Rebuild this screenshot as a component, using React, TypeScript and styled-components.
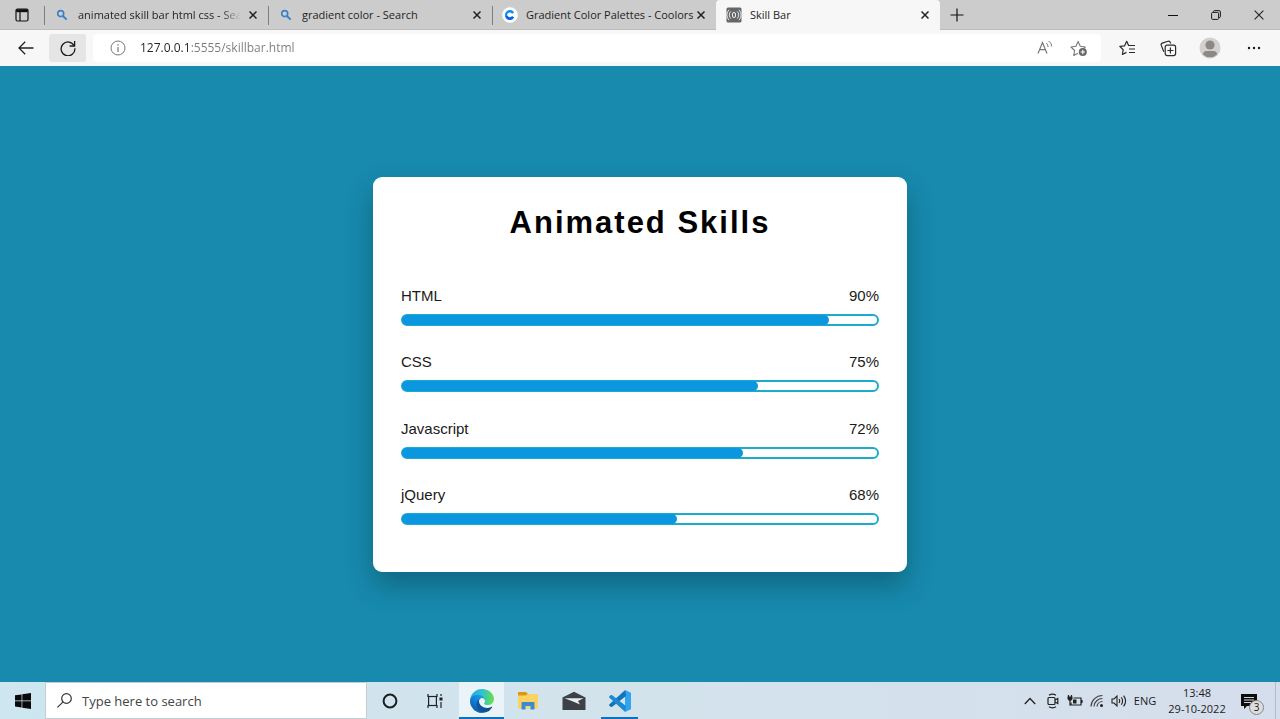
import React from "react";
import styled, { createGlobalStyle, css } from "styled-components";

const GlobalStyle = createGlobalStyle`
  *, *::before, *::after { box-sizing: border-box; }
  html, body, #root { height: 100%; }
  body { margin: 0; font-family: "Open Sans", "Noto Sans", sans-serif; overflow: hidden; }
  button { font: inherit; color: inherit; background: none; border: 0; padding: 0; margin: 0; }
  h1, ul, p { margin: 0; padding: 0; }
  svg { display: block; flex: none; }
`;

const Desktop = styled.div`
  display: flex;
  flex-direction: column;
  min-height: 100%;
`;

/* ---------- browser: tab strip ---------- */

const TabStrip = styled.header`
  display: flex;
  height: 30px;
  background: #cccccc;
  border-bottom: 1px solid #bdbdbd;
`;

const StripButton = styled.button<{ $width: number }>`
  display: flex;
  align-items: center;
  justify-content: center;
  width: ${(p) => p.$width}px;
  flex: none;
  color: #1b1b1b;
`;

const TabList = styled.div`
  display: flex;
  flex: 0 1 897px;
  min-width: 0;
`;

const Tab = styled.div<{ $active?: boolean }>`
  position: relative;
  display: flex;
  flex: 0 1 224px;
  min-width: 0;
  align-items: center;
  padding: 0 7px 0 10px;
  ${(p) =>
    p.$active
      ? css`
          height: 30px;
          background: #f7f7f7;
          border-radius: 4px 4px 0 0;
        `
      : css`
          &::before {
            content: "";
            position: absolute;
            left: 0;
            top: 6px;
            height: 19px;
            width: 1px;
            background: #7d7d7d;
          }
        `}
`;

const TabTitle = styled.button<{ $fade?: boolean }>`
  flex: 1;
  min-width: 0;
  margin-left: 8px;
  overflow: hidden;
  white-space: nowrap;
  text-align: left;
  font-size: 11px;
  line-height: 16px;
  color: #1f1f1f;
  ${(p) =>
    p.$fade &&
    css`
      margin-right: 4px;
      mask-image: linear-gradient(to right, #000 calc(100% - 20px), transparent);
    `}
`;

const CloseTab = styled.button`
  display: flex;
  align-items: center;
  justify-content: center;
  width: 16px;
  height: 16px;
  flex: none;
`;

const Favicon = styled.span`
  display: flex;
  align-items: center;
  justify-content: center;
  width: 16px;
  flex: none;
`;

const WindowControls = styled.div`
  display: flex;
  margin-left: auto;
`;

/* ---------- browser: toolbar ---------- */

const Toolbar = styled.div`
  display: flex;
  align-items: center;
  height: 36px;
  padding: 0 4px 0 7px;
  background: #f7f7f7;
`;

const ToolButton = styled.button<{ $active?: boolean; $width?: number }>`
  display: flex;
  align-items: center;
  justify-content: center;
  width: ${(p) => p.$width ?? 42}px;
  height: 28px;
  flex: none;
  border-radius: 3px;
  color: #2b2b2b;
  ${(p) => p.$active && "margin-left: 4px; background: #e5e5e5;"}
`;

const AddressBar = styled.form`
  display: flex;
  align-items: center;
  flex: 1;
  min-width: 0;
  height: 28px;
  margin: 0 5px 0 7px;
  padding: 0 5px 0 9px;
  background: #ffffff;
  border-radius: 4px;
`;

const AddressInput = styled.input`
  flex: 1;
  min-width: 0;
  margin-left: 6px;
  padding: 0;
  border: 0;
  outline: 0;
  font: 12px/18px "Open Sans", "Noto Sans", sans-serif;
  color: transparent;
  background: linear-gradient(to right, #222222 51px, #7a7a7a 51px);
  background-clip: text;
  -webkit-background-clip: text;
`;

/* ---------- page ---------- */

const Page = styled.main`
  display: flex;
  flex: 1;
  align-items: center;
  justify-content: center;
  padding: 20px 20px 19px;
  background: #178aae;
`;

const Card = styled.section`
  width: 534px;
  max-width: 100%;
  padding: 25px 28px 47px;
  background: #ffffff;
  border-radius: 9px;
  box-shadow: 0 14px 28px rgba(0, 0, 0, 0.25);
  font-family: "Liberation Sans", Arial, sans-serif;
`;

const Title = styled.h1`
  font-size: 31px;
  line-height: 42px;
  letter-spacing: 2px;
  text-align: center;
  color: #000000;
`;

const SkillList = styled.ul`
  display: flex;
  flex-direction: column;
  justify-content: space-between;
  min-height: 238px;
  margin-top: 43px;
  list-style: none;
`;

const SkillLabel = styled.div`
  display: flex;
  justify-content: space-between;
  margin-bottom: 9px;
  font-size: 15px;
  line-height: 18px;
  color: #1a1a1a;
`;

const Track = styled.div`
  height: 12px;
  border: 2px solid #1cabcb;
  border-radius: 6px;
  background: #ffffff;
`;

const Fill = styled.div`
  height: 10px;
  margin: -1px 0 0 -1px;
  border-radius: 5px;
  background: #0b97df;
`;

/* ---------- taskbar ---------- */

const Taskbar = styled.footer`
  display: flex;
  height: 37px;
  background: linear-gradient(to right, #cde6f0, #d3e3ec 50%, #d5deec);
`;

const StartButton = styled.button`
  display: flex;
  align-items: center;
  justify-content: center;
  width: 45px;
  flex: none;
`;

const SearchBox = styled.label`
  display: flex;
  align-items: center;
  flex: 0 1 322px;
  min-width: 0;
  padding-left: 11px;
  background: #ffffff;
  border: 1px solid #c3ced3;
`;

const SearchInput = styled.input`
  flex: 1;
  min-width: 0;
  margin-left: 9px;
  padding: 0;
  border: 0;
  outline: 0;
  background: none;
  font: 13px/20px "Open Sans", "Noto Sans", sans-serif;
  &::placeholder { color: #444444; opacity: 1; }
`;

const Apps = styled.nav`
  display: flex;
  gap: 1px;
`;

const AppButton = styled.button<{ $active?: boolean; $running?: boolean }>`
  display: flex;
  align-items: center;
  justify-content: center;
  width: 45px;
  ${(p) => p.$active && "background: #eaf4f8;"}
  ${(p) => p.$active && "box-shadow: inset 0 -2px #0a72c4;"}
  ${(p) =>
    p.$running &&
    "background: linear-gradient(#0a72c4, #0a72c4) center bottom / 37px 2px no-repeat;"}
`;

const Tray = styled.div`
  display: flex;
  align-items: center;
  margin-left: auto;
  color: #1c1c1c;
`;

const TrayButton = styled.button<{ $width?: number }>`
  position: relative;
  display: flex;
  align-items: center;
  justify-content: center;
  width: ${(p) => p.$width ?? 22}px;
  height: 37px;
  font-size: 11px;
`;

const NotificationButton = styled(TrayButton)`
  padding-right: 12px;
`;

const Clock = styled.button`
  width: 74px;
  font-size: 11px;
  line-height: 16px;
  text-align: center;
`;

const Badge = styled.span`
  position: absolute;
  right: 11px;
  bottom: 4px;
  width: 15px;
  height: 15px;
  border: 1px solid #858585;
  border-radius: 50%;
  background: #dddddd;
  font-size: 10px;
  line-height: 13px;
  text-align: center;
`;

const ShowDesktop = styled.button`
  width: 5px;
  height: 37px;
  border-left: 1px solid #b4bccb;
`;

/* ---------- icons ---------- */

const Cross = ({ size = 8, color = "#222", w = 1.5 }: { size?: number; color?: string; w?: number }) => (
  <svg width={size} height={size} viewBox="0 0 8 8">
    <path d="M.5.5l7 7M7.5.5l-7 7" stroke={color} strokeWidth={w} fill="none" />
  </svg>
);

const BingSearch = () => (
  <svg width="12" height="12" viewBox="0 0 12 12" fill="none" stroke="#3a80c6">
    <circle cx="4.7" cy="4.6" r="3" strokeWidth="1.6" />
    <path d="M7 7l3.6 3.6" strokeWidth="2" />
  </svg>
);

const CoolorsLogo = () => (
  <svg width="16" height="16" viewBox="0 0 16 16">
    <circle cx="8" cy="8" r="7.8" fill="#fff" />
    <path d="M12.2 5.4A5 5 0 1 0 12.2 10.6L10 9.3A2.6 2.6 0 1 1 10 6.7Z" fill="#0a8df5" />
    <path d="M12.2 10.6A5 5 0 0 1 3.2 9.5L5.6 8.8A2.6 2.6 0 0 0 10 9.3Z" fill="#0b62ee" />
  </svg>
);

const BroadcastLogo = () => (
  <svg width="16" height="16" viewBox="0 0 16 16" fill="none" stroke="#f3f3f3">
    <rect x=".5" y=".5" width="15" height="15" rx="1.5" fill="#666" stroke="none" />
    <rect x="6.5" y="5.5" width="3" height="5" rx="1.5" strokeWidth="1" />
    <path d="M4.8 4.4a5 5 0 0 0 0 7.200M11.200 4.400a5 5 0 0 1 0 7.200M3 2.800a7.500 7.500 0 0 0 0 10.400M13 2.800a7.500 7.500 0 0 1 0 10.400" strokeWidth=".9" />
  </svg>
);

const TabActions = () => (
  <svg width="14" height="14" viewBox="0 0 14 14" fill="none" stroke="#111">
    <rect x="1" y="1" width="12" height="12" rx="1.5" strokeWidth="1.2" />
    <path d="M1.2 2.7h11.6" strokeWidth="3" />
    <path d="M5 3v10" strokeWidth="1.2" />
  </svg>
);

const Edge = () => (
  <svg width="24" height="24" viewBox="0 0 256 256">
    <defs>
      <linearGradient id="edgeBase" x1="63" y1="177" x2="241" y2="177" gradientUnits="userSpaceOnUse">
        <stop offset="0" stopColor="#0c59a4" />
        <stop offset="1" stopColor="#114a8b" />
      </linearGradient>
      <linearGradient id="edgeSide" x1="157" y1="100" x2="46" y2="220" gradientUnits="userSpaceOnUse">
        <stop offset="0" stopColor="#1b9de2" />
        <stop offset=".5" stopColor="#1383d6" />
        <stop offset="1" stopColor="#0e5fb4" />
      </linearGradient>
      <linearGradient id="edgeTop" x1="20" y1="90" x2="245" y2="110" gradientUnits="userSpaceOnUse">
        <stop offset="0" stopColor="#2aa9e6" />
        <stop offset=".45" stopColor="#2cc3d2" />
        <stop offset="1" stopColor="#66dd4f" />
      </linearGradient>
    </defs>
    <path fill="url(#edgeBase)" d="M231 190.5a93.700 93.700 0 0 1-10.500 4.700 101.900 101.900 0 0 1-35.900 6.400c-47.300 0-88.500-32.500-88.500-74.300a31.500 31.500 0 0 1 16.400-27.300c-42.800 1.800-53.800 46.400-53.800 72.500 0 73.900 68.100 81.400 82.800 81.400 7.900 0 19.800-2.300 27-4.600l1.300-.4a128.300 128.300 0 0 0 66.600-52.800 4 4 0 0 0-5.400-5.600Z" />
    <path fill="url(#edgeSide)" d="M105.700 241.400a79.200 79.200 0 0 1-22.700-21.300 80.700 80.700 0 0 1 29.500-120c3.200-1.500 8.500-4.100 15.600-4a32.400 32.400 0 0 1 25.700 13 31.900 31.900 0 0 1 6.300 18.700c0-.2 24.500-79.600-80-79.600-43.900 0-80 41.700-80 78.200a130.200 130.200 0 0 0 12.100 56 128 128 0 0 0 156.400 67 75.500 75.500 0 0 1-62.800-8Z" />
    <path fill="url(#edgeTop)" d="M152.300 148.900c-.9 1-3.400 2.500-3.400 5.600 0 2.600 1.700 5.200 4.800 7.300 14.400 10.100 41.700 8.700 41.700 8.700a59.600 59.600 0 0 0 30.300-8.300 61.400 61.400 0 0 0 30.400-52.900c.3-22.400-8-37.300-11.300-43.900C223.500 23.900 177.700 0 128 0A128 128 0 0 0 0 126.200c.5-36.500 36.800-66 80-66 3.500 0 23.500.3 42 10.100 16.300 8.600 24.900 18.900 30.900 29.200 6.200 10.700 7.300 24.200 7.300 29.600s-2.700 13.300-7.900 19.800Z" />
  </svg>
);

const Explorer = () => (
  <svg width="22" height="20" viewBox="0 0 22 20">
    <path d="M1 2q0-1 1-1h7l2 2v4H1z" fill="#d99a12" />
    <path d="M1 4.500h8l1.500-1.500H20q1 0 1 1v13.500H1z" fill="#fdd264" />
    <path d="M4.500 18.500V12q0-1 1-1h11q1 0 1 1v6.500h-4V15h-5v3.500z" fill="#3a8bd3" />
  </svg>
);

const Mail = () => (
  <svg width="24" height="20" viewBox="0 0 24 20">
    <path d="M.5 6.500L12 .8l11.500 5.700V19H.5z" fill="#3d4146" />
    <path d="M2.500 7.300h19L16 10l2 3.500-7-3z" fill="#e6eef3" />
  </svg>
);

const VsCode = () => (
  <svg width="24" height="24" viewBox="0 0 24 24">
    <path d="M17 1l6 2.700v16.600L17 23V1z" fill="#2fa4ef" />
    <path d="M17.200 1L1.200 15.400q-.5.500 0 1l1.700 1.500q.5.400 1 0L18 7z" fill="#1175bd" />
    <path d="M17.200 23L1.200 8.600q-.5-.5 0-1l1.700-1.500q.5-.4 1 0L18 17z" fill="#1b8ad3" />
  </svg>
);

/* ---------- data ---------- */

const tabs = [
  { title: "animated skill bar html css - Search", icon: <BingSearch />, fade: true },
  { title: "gradient color - Search", icon: <BingSearch /> },
  { title: "Gradient Color Palettes - Coolors", icon: <CoolorsLogo /> },
  { title: "Skill Bar", icon: <BroadcastLogo />, active: true },
];

const skills = [
  { name: "HTML", label: "90%", fill: 90 },
  { name: "CSS", label: "75%", fill: 75 },
  { name: "Javascript", label: "72%", fill: 72 },
  { name: "jQuery", label: "68%", fill: 58 },
];

export default function App() {
  return (
    <Desktop>
      <GlobalStyle />
      <TabStrip>
        <StripButton $width={44} aria-label="Tab actions">
          <TabActions />
        </StripButton>
        <TabList>
          {tabs.map((t) => (
            <Tab key={t.title} $active={t.active}>
              <Favicon>{t.icon}</Favicon>
              <TabTitle $fade={t.fade}>{t.title}</TabTitle>
              <CloseTab aria-label="Close tab">
                <Cross />
              </CloseTab>
            </Tab>
          ))}
        </TabList>
        <StripButton $width={32} aria-label="New tab">
          <svg width="14" height="14" viewBox="0 0 14 14">
            <path d="M7 .5v13M.5 7h13" stroke="#111" strokeWidth="1.200" />
          </svg>
        </StripButton>
        <WindowControls>
          <StripButton $width={43} aria-label="Minimize">
            <svg width="10" height="10" viewBox="0 0 10 10">
              <path d="M0 5.500h10" stroke="#111" />
            </svg>
          </StripButton>
          <StripButton $width={43} aria-label="Restore">
            <svg width="10" height="10" viewBox="0 0 10 10" fill="none" stroke="#1b1b1b">
              <rect x=".6" y="2.400" width="7" height="7" rx="1" />
              <path d="M2.600 2.200V1.500q0-.9.900-.9H8q1.400 0 1.400 1.400v4.600q0 .9-.9.900h-.7" />
            </svg>
          </StripButton>
          <StripButton $width={43} aria-label="Close">
            <Cross size={10} w={0.9} />
          </StripButton>
        </WindowControls>
      </TabStrip>

      <Toolbar>
        <ToolButton $width={38} aria-label="Back">
          <svg width="16" height="14" viewBox="0 0 16 14" fill="none" stroke="#222" strokeWidth="1.300">
            <path d="M15.500 7H1M7.200.8L1 7l6.200 6.200" />
          </svg>
        </ToolButton>
        <ToolButton $width={37} $active aria-label="Refresh">
          <svg width="16" height="16" viewBox="0 0 16 16" fill="none" stroke="#1a1a1a" strokeWidth="1.300">
            <path d="M14.300 6A6.900 6.900 0 1 0 14.900 8.300" />
            <path d="M14.600 1v5h-5" />
          </svg>
        </ToolButton>
        <AddressBar>
          <ToolButton $width={32} type="button" aria-label="Site information">
            <svg width="16" height="16" viewBox="0 0 16 16" fill="none" stroke="#777">
              <circle cx="8" cy="8" r="7" />
              <path d="M8 7v5M8 4.300v1.400" strokeWidth="1.200" />
            </svg>
          </ToolButton>
          <AddressInput aria-label="Address" defaultValue="127.0.0.1:5555/skillbar.html" />
          <ToolButton $width={34} type="button" aria-label="Read aloud">
            <svg width="16" height="16" viewBox="0 0 16 16" fill="none" stroke="#777" strokeWidth="1.200">
              <path d="M1 13.500L5.500 2.500 10 13.500M2.600 9.700h5.800" />
              <path d="M9.300 3q1.800 1.500 1.800 4M11.700 1q3 2 3 5.500" strokeWidth="1" />
            </svg>
          </ToolButton>
          <ToolButton $width={34} type="button" aria-label="Add to favorites">
            <svg width="18" height="17" viewBox="0 0 18 17" fill="none" stroke="#777" strokeWidth="1.100">
              <path d="M8 13.200l-4.300 2.300.9-5L1 7l4.900-.7L8.100 1.600l2.200 4.700 5 .7-2.400 2.200" strokeLinejoin="round" />
              <circle cx="12.800" cy="12" r="4" fill="#666" stroke="none" />
              <path d="M12.800 9.800v4.400M10.600 12H15" stroke="#fff" />
            </svg>
          </ToolButton>
        </AddressBar>
        <ToolButton aria-label="Favorites">
          <svg width="17" height="16" viewBox="0 0 17 16" fill="none" stroke="#2b2b2b" strokeWidth="1.200">
            <path d="M9.600 5.500L7.700 1.300 5.600 5.800.8 6.400l3.400 3.300-.8 4.800 4.100-2.100" strokeLinejoin="round" />
            <path d="M9 5.500h7M10 9h6M10 12.500h6" />
          </svg>
        </ToolButton>
        <ToolButton $width={40} aria-label="Collections">
          <svg width="17" height="17" viewBox="0 0 17 17" fill="none" stroke="#2b2b2b" strokeWidth="1.200">
            <rect x="5.200" y="5.200" width="10.400" height="10.400" rx="2" />
            <path d="M10.400 7.500v6M7.400 10.500h6M3.800 11.800L1.300 5.400q-.6-1.700 1-2.300L8 1.300q1.700-.5 2.300 1.200l.4 1" />
          </svg>
        </ToolButton>
        <ToolButton $width={44} aria-label="Profile">
          <svg width="22" height="22" viewBox="0 0 22 22">
            <circle cx="11" cy="11" r="10.500" fill="#d3d0ce" />
            <circle cx="11" cy="8" r="4.600" fill="#8b8886" />
            <path d="M4 17.500q0-3.500 3.500-3.500h7q3.500 0 3.500 3.500a10 10 0 0 1-14 0z" fill="#8b8886" />
          </svg>
        </ToolButton>
        <ToolButton $width={44} aria-label="Settings and more">
          <svg width="14" height="4" viewBox="0 0 14 4" fill="#1b1b1b">
            <circle cx="2" cy="2" r="1.200" />
            <circle cx="7" cy="2" r="1.200" />
            <circle cx="12" cy="2" r="1.200" />
          </svg>
        </ToolButton>
      </Toolbar>

      <Page>
        <Card>
          <Title>Animated Skills</Title>
          <SkillList>
            {skills.map((s) => (
              <li key={s.name}>
                <SkillLabel>
                  <span>{s.name}</span>
                  <span>{s.label}</span>
                </SkillLabel>
                <Track>
                  <Fill style={{ width: `${s.fill}%` }} />
                </Track>
              </li>
            ))}
          </SkillList>
        </Card>
      </Page>

      <Taskbar>
        <StartButton aria-label="Start">
          <svg width="16" height="16" viewBox="0 0 16 16" fill="#0a0a0a">
            <path d="M0 2.300l6.600-.9v6.200H0zM7.300 1.300L16 0v7.600H7.300zM0 8.300h6.600v6.200L0 13.600zM7.300 8.300H16V16l-8.700-1.300z" />
          </svg>
        </StartButton>
        <SearchBox>
          <svg width="16" height="16" viewBox="0 0 16 16" fill="none" stroke="#333" strokeWidth="1.200">
            <circle cx="9.500" cy="5.500" r="4.800" />
            <path d="M6.100 8.900L.4 14.400" />
          </svg>
          <SearchInput type="text" aria-label="Search" placeholder="Type here to search" />
        </SearchBox>
        <Apps>
          <AppButton aria-label="Cortana">
            <svg width="16" height="16" viewBox="0 0 16 16" fill="none">
              <circle cx="8" cy="8" r="6.400" stroke="#1a1f22" strokeWidth="2" />
            </svg>
          </AppButton>
          <AppButton aria-label="Task view">
            <svg width="17" height="16" viewBox="0 0 17 16" fill="none" stroke="#1d2225" strokeWidth="1.200">
              <path d="M1 1v2.500h9V1M1 15v-2.500h9V15" />
              <rect x="1.600" y="3.500" width="7.800" height="9" />
              <path d="M14 1v2M14 9v6" />
              <rect x="12.500" y="4.500" width="3" height="3" fill="#1d2225" stroke="none" />
            </svg>
          </AppButton>
          <AppButton $active aria-label="Microsoft Edge">
            <Edge />
          </AppButton>
          <AppButton aria-label="File Explorer">
            <Explorer />
          </AppButton>
          <AppButton aria-label="Mail">
            <Mail />
          </AppButton>
          <AppButton $running aria-label="Visual Studio Code">
            <VsCode />
          </AppButton>
        </Apps>
        <Tray>
          <TrayButton $width={24} aria-label="Show hidden icons">
            <svg width="12" height="8" viewBox="0 0 12 8" fill="none" stroke="#222" strokeWidth="1.300">
              <path d="M.8 7L6 1.500 11.200 7" />
            </svg>
          </TrayButton>
          <TrayButton aria-label="Meet now">
            <svg width="12" height="16" viewBox="0 0 12 16" fill="none" stroke="#222" strokeWidth="1.200">
              <rect x="1" y="4.500" width="7" height="7" rx="1" />
              <path d="M8 7l2.800-1.500v5L8 9M2 2.200q3.500-2 7 0M2 13.800q3.500 2 7 0" />
            </svg>
          </TrayButton>
          <TrayButton aria-label="Battery">
            <svg width="16" height="14" viewBox="0 0 16 14" fill="none" stroke="#222" strokeWidth="1.200">
              <path d="M6.500 4H14v7H4V8.500M15 6v3" />
              <path d="M1.500 1v2M4.500 1v2M3 6.500V11h1" />
              <path d="M.5 2.500h5V5q-1 2-2.500 2T.5 5z" fill="#222" stroke="none" />
              <path d="M6 5.500h3.500v4H6z" fill="#222" stroke="none" />
            </svg>
          </TrayButton>
          <TrayButton aria-label="Network">
            <svg width="14" height="14" viewBox="0 0 14 14" fill="none" stroke="#444" strokeWidth="1.200">
              <path d="M1 12.500A11.500 11.500 0 0 1 12.500 1.500M4 12.500a8.500 8.500 0 0 1 8.500-8M7 12.500a5.500 5.500 0 0 1 5.500-5" />
              <circle cx="11.500" cy="11.500" r="1.500" fill="#222" stroke="none" />
            </svg>
          </TrayButton>
          <TrayButton aria-label="Volume">
            <svg width="16" height="14" viewBox="0 0 16 14" fill="none" stroke="#222" strokeWidth="1.100">
              <path d="M1 5h2l3-3v10L3 9H1z" />
              <path d="M8 5q1.400 2 0 4M10.300 3.300q2.600 3.700 0 7.400M12.600 1.700q4 5.300 0 10.600" />
            </svg>
          </TrayButton>
          <TrayButton $width={30} aria-label="Input language">ENG</TrayButton>
          <Clock>
            <div>13:48</div>
            <div>29-10-2022</div>
          </Clock>
          <NotificationButton $width={41} aria-label="Notifications">
            <svg width="16" height="16" viewBox="0 0 16 16">
              <path d="M0 1h16v12H6l-3 3v-3H0z" fill="#0d0d0d" />
              <path d="M3 4.500h10M3 7h10M3 9.500h7" stroke="#cfd5df" />
            </svg>
            <Badge>3</Badge>
          </NotificationButton>
          <ShowDesktop aria-label="Show desktop" />
        </Tray>
      </Taskbar>
    </Desktop>
  );
}
